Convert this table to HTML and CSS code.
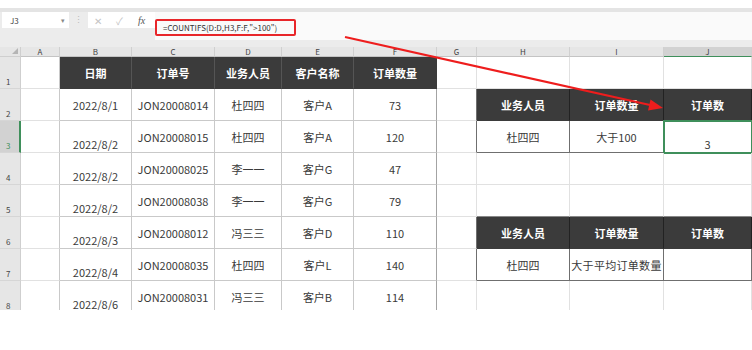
FILE: index.html
```html
<!DOCTYPE html>
<html lang="zh-CN">
<head>
	<meta charset="UTF-8">
	<title>COUNTIFS</title>
	<link rel="stylesheet" href="styles.css">
</head>
<body>
	<div class="top">
		<div class="namebox"><span>J3</span><i class="drop">▾</i></div>
		<div class="dots">⋮</div>
		<div class="ctrl">
			<span class="x">✕</span>
			<span class="ok">✓</span>
			<span class="fx">fx</span>
		</div>
		<div class="formula">
			<span class="mark">=COUNTIFS(D:D,H3,F:F,"&gt;100")</span>
		</div>
	</div>

	<div class="sheet">
		<div class="grid">
			<!-- column letters -->
			<div class="corner"><i></i></div>
			<div class="ch">A</div>
			<div class="ch">B</div>
			<div class="ch">C</div>
			<div class="ch">D</div>
			<div class="ch">E</div>
			<div class="ch">F</div>
			<div class="ch">G</div>
			<div class="ch">H</div>
			<div class="ch">I</div>
			<div class="ch on">J</div>

			<!-- 1 -->
			<div class="rh">1</div>
			<div class="c ta"></div>
			<div class="c th">日期</div>
			<div class="c th">订单号</div>
			<div class="c th">业务人员</div>
			<div class="c th">客户名称</div>
			<div class="c th end">订单数量</div>
			<div class="c"></div>
			<div class="c"></div>
			<div class="c"></div>
			<div class="c"></div>

			<!-- 2 -->
			<div class="rh">2</div>
			<div class="c ta"></div>
			<div class="c t">2022/8/1</div>
			<div class="c t">JON20008014</div>
			<div class="c t">杜四四</div>
			<div class="c t">客户A</div>
			<div class="c t end">73</div>
			<div class="c gl"></div>
			<div class="c kh">业务人员</div>
			<div class="c kh">订单数量</div>
			<div class="c kh">订单数</div>

			<!-- 3 -->
			<div class="rh on">3</div>
			<div class="c ta"></div>
			<div class="c t low">2022/8/2</div>
			<div class="c t">JON20008015</div>
			<div class="c t">杜四四</div>
			<div class="c t">客户A</div>
			<div class="c t end">120</div>
			<div class="c gl"></div>
			<div class="c k">杜四四</div>
			<div class="c k">大于100</div>
			<div class="c k low sel">3</div>

			<!-- 4 -->
			<div class="rh">4</div>
			<div class="c ta"></div>
			<div class="c t low">2022/8/2</div>
			<div class="c t">JON20008025</div>
			<div class="c t">李一一</div>
			<div class="c t">客户G</div>
			<div class="c t end">47</div>
			<div class="c"></div>
			<div class="c"></div>
			<div class="c"></div>
			<div class="c"></div>

			<!-- 5 -->
			<div class="rh">5</div>
			<div class="c ta"></div>
			<div class="c t low">2022/8/2</div>
			<div class="c t">JON20008038</div>
			<div class="c t">李一一</div>
			<div class="c t">客户G</div>
			<div class="c t end">79</div>
			<div class="c"></div>
			<div class="c kt"></div>
			<div class="c kt"></div>
			<div class="c kt"></div>

			<!-- 6 -->
			<div class="rh">6</div>
			<div class="c ta"></div>
			<div class="c t low">2022/8/3</div>
			<div class="c t">JON20008012</div>
			<div class="c t">冯三三</div>
			<div class="c t">客户D</div>
			<div class="c t end">110</div>
			<div class="c gl"></div>
			<div class="c kh">业务人员</div>
			<div class="c kh">订单数量</div>
			<div class="c kh">订单数</div>

			<!-- 7 -->
			<div class="rh">7</div>
			<div class="c ta"></div>
			<div class="c t low">2022/8/4</div>
			<div class="c t">JON20008035</div>
			<div class="c t">杜四四</div>
			<div class="c t">客户L</div>
			<div class="c t end">140</div>
			<div class="c gl"></div>
			<div class="c k">杜四四</div>
			<div class="c k tight">大于平均订单数量</div>
			<div class="c k"></div>

			<!-- 8 -->
			<div class="rh">8</div>
			<div class="c ta"></div>
			<div class="c t low">2022/8/6</div>
			<div class="c t">JON20008031</div>
			<div class="c t">冯三三</div>
			<div class="c t">客户B</div>
			<div class="c t end">114</div>
			<div class="c"></div>
			<div class="c"></div>
			<div class="c"></div>
			<div class="c"></div>
		</div>
	</div>

	<!-- red pointer from the formula to J2 -->
	<svg class="arrow" width="752" height="350" viewBox="0 0 752 350">
		<line x1="345" y1="37" x2="650" y2="105" stroke="#ee1d1d" stroke-width="2.2"/>
		<polygon points="663,108 648,110.5 650.5,99.5" fill="#ee1d1d"/>
	</svg>
</body>
</html>
```

FILE: styles.css
```css
*{
	margin: 0;
	padding: 0;
	box-sizing: border-box;
}
body{
	background: #fff;
	width: 752px;
	height: 350px;
	position: relative;
	overflow: hidden;
	font-family: "Noto Sans CJK SC", "Liberation Sans", sans-serif;
	color: #3a3a3a;
}

/* formula bar */
.top{
	margin-top: 8px;
	height: 39px;
	background: #ececec;
	border-top: 4px solid #e4e4e4;
	display: flex;
	align-items: flex-start;
}
.namebox{
	margin-left: 2px;
	width: 67px;
	height: 16px;
	background: #fff;
	display: flex;
	align-items: center;
	justify-content: space-between;
	padding: 0 4px 0 8px;
	font-size: 8px;
	color: #444;
}
.namebox .drop{
	font-style: normal;
	font-size: 7px;
	color: #888;
}
.dots{
	width: 19px;
	height: 16px;
	text-align: center;
	font-size: 9px;
	line-height: 16px;
	color: #bbb;
}
.ctrl{
	width: 67px;
	height: 16px;
	background: #fff;
	display: flex;
	align-items: center;
	padding-left: 6px;
	font-size: 10px;
	color: #c4c4c4;
}
.ctrl .x{
	width: 22px;
}
.ctrl .ok{
	width: 22px;
}
.ctrl .fx{
	font-family: "Liberation Serif", serif;
	font-style: italic;
	color: #555;
	font-size: 10px;
}
.formula{
	flex: 1;
	height: 28px;
	background: #fafafa;
}
.formula .mark{
	display: inline-block;
	margin-top: -1px;
	width: 141px;
	height: 17px;
	border: 2px solid #e8262a;
	border-radius: 2px;
	padding-left: 6px;
	font-size: 8px;
	line-height: 13px;
	color: #333;
}

/* sheet */
.sheet{
	height: 263px;
	overflow: hidden;
}
.grid{
	display: grid;
	grid-template-columns: 21px 39px 72px 83px 67px 72px 83px 40px 93px 94px 1fr;
	grid-template-rows: 10px repeat(8, 32px);
	font-size: 11px;
}
.corner{
	background: #e6e6e6;
	border-right: 1px solid #cfcfcf;
	border-bottom: 1px solid #cfcfcf;
	position: relative;
}
.corner i{
	position: absolute;
	right: 2px;
	bottom: 2px;
	border-left: 6px solid transparent;
	border-bottom: 6px solid #b5b5b5;
}
.ch{
	background: #e6e6e6;
	border-right: 1px solid #d0d0d0;
	border-bottom: 1px solid #c4c4c4;
	font-size: 8px;
	line-height: 9px;
	text-align: center;
	color: #444;
}
.ch.on{
	background: #d2d2d2;
	border-bottom: 1px solid #3f8f5b;
}
.rh{
	background: #e6e6e6;
	border-right: 1px solid #cfcfcf;
	border-bottom: 1px solid #d6d6d6;
	font-size: 8px;
	color: #444;
	display: flex;
	align-items: flex-end;
	padding: 0 0 1px 6px;
}
.rh.on{
	background: #d2d2d2;
	border-right: 2px solid #3f8f5b;
	color: #3f8f5b;
}

.c{
	border-right: 1px solid #e1e1e1;
	border-bottom: 1px solid #e1e1e1;
	display: flex;
	align-items: center;
	justify-content: center;
	white-space: nowrap;
}
.c.low{
	align-items: flex-end;
}
.c.ta{
	border-right-color: #c9c9c9;
}
.c.t{
	border-right-color: #c9c9c9;
	border-bottom-color: #c9c9c9;
}
.c.end{
	border-right-color: #a3a3a3;
}
.c.th{
	background: #3b3b3b;
	color: #fff;
	font-weight: bold;
	border-right-color: #555;
	border-bottom-color: #3b3b3b;
}
.c.th.end{
	border-right-color: #3b3b3b;
}
.c.gl{
	border-right-color: #6f6f6f;
}
.c.kh{
	background: #3b3b3b;
	color: #fff;
	font-weight: bold;
	border-right-color: #222;
	border-bottom-color: #3b3b3b;
}
.c.kt{
	border-bottom-color: #888;
}
.c.k{
	border-right-color: #6f6f6f;
	border-bottom-color: #6f6f6f;
}
.c.tight{
	letter-spacing: 0.3px;
}
.c.sel{
	outline: 2px solid #3f8f5b;
	outline-offset: -1px;
}

.arrow{
	position: absolute;
	left: 0;
	top: 0;
	pointer-events: none;
}
```
